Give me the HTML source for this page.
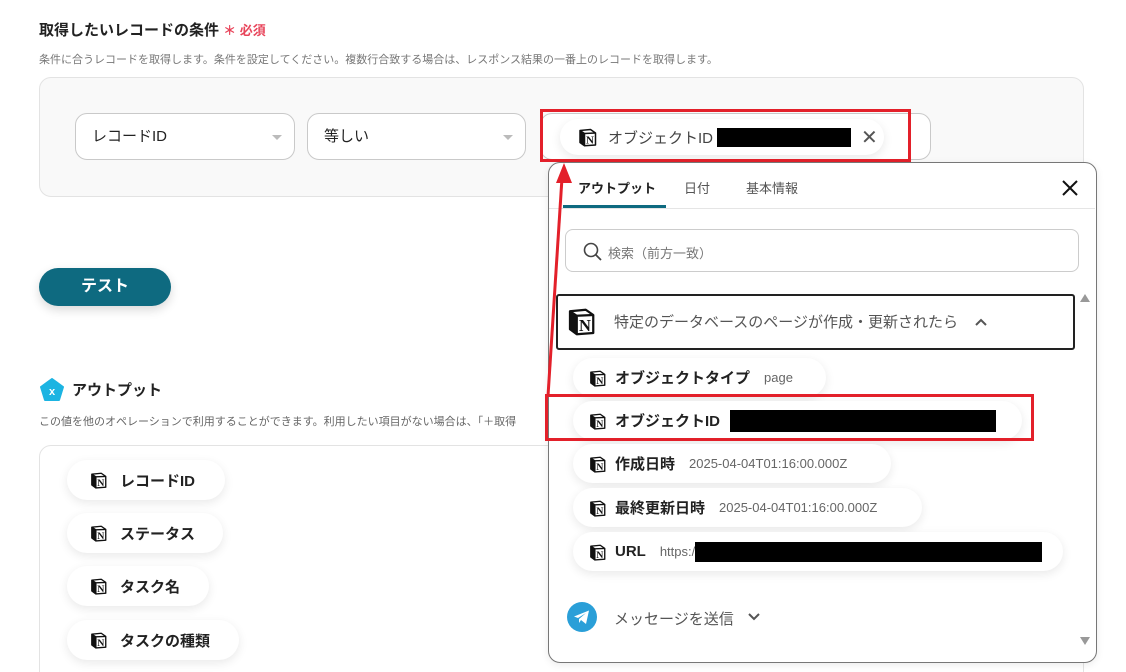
<!DOCTYPE html>
<html style="width:1126px;height:672px;overflow:hidden"><head><meta charset="utf-8">
<style>
*{box-sizing:border-box;margin:0;padding:0}
body{width:1126px;height:672px;overflow:hidden;background:#fff;position:relative;font-family:"Liberation Sans","Noto Sans CJK JP",sans-serif;color:#222}
.a{position:absolute}
.sel{position:absolute;height:47px;border:1px solid #c9c9c9;border-radius:12px;background:#fff;font-size:15px;padding:0 16px;line-height:45px;color:#222}
.sel:after{content:"";position:absolute;right:12px;top:21px;border-left:5px solid transparent;border-right:5px solid transparent;border-top:5px solid #bbb}
.chip{position:absolute;height:39px;background:#fff;border-radius:20px;box-shadow:0 3px 10px rgba(0,0,0,.09);display:flex;align-items:center;padding-left:16px;font-size:15px;font-weight:bold;color:#222;white-space:nowrap}
.chip svg{margin-right:8px;flex:none}
.chip .v{font-weight:normal;color:#666;font-size:13px;margin-left:14px}
.blk{background:#000;display:inline-block}
</style></head><body>
<svg width="0" height="0" style="position:absolute"><defs>
<symbol id="n" viewBox="0 0 20 20"><path d="M2 3.5L12.5 2.5 17.5 6 17.5 18 6.5 18.8 2 15.5Z" fill="#fff" stroke="#111" stroke-width="1.5" stroke-linejoin="round"/><path d="M2 3.5L6.5 6.5 17.5 6M6.5 6.5L6.5 18.8" fill="none" stroke="#111" stroke-width="1.5"/><path d="M2 3.5L6.5 6.5 6.5 18.8 2 15.5Z" fill="#111"/><text x="12" y="16.5" font-family="Liberation Serif,serif" font-weight="bold" font-size="11" text-anchor="middle" fill="#111">N</text></symbol>
</defs></svg>

<div class="a" style="left:39px;top:19px;font-size:15px;font-weight:bold">取得したいレコードの条件 <span style="color:#e8445a;font-size:13px">＊ 必須</span></div>
<div class="a" style="left:39px;top:51px;font-size:11px;color:#777">条件に合うレコードを取得します。条件を設定してください。複数行合致する場合は、レスポンス結果の一番上のレコードを取得します。</div>
<div class="a" style="left:39px;top:77px;width:1045px;height:120px;background:#f9f9f9;border:1px solid #e3e3e3;border-radius:12px"></div>
<div class="sel" style="left:75px;top:113px;width:220px">レコードID</div>
<div class="sel" style="left:307px;top:113px;width:219px">等しい</div>
<div class="a" style="left:540px;top:113px;width:391px;height:47px;border:1px solid #c9c9c9;border-radius:12px;background:#fff"></div>
<div class="chip" style="left:560px;top:119px;width:324px;height:36px;font-weight:normal;color:#444;padding-left:18px"><svg width="20" height="20"><use href="#n"/></svg><span style="margin-left:2px">オブジェクトID</span><span class="blk" style="width:134px;height:19px;margin-left:4px"></span><span style="margin-left:10px;font-size:20px;color:#555">✕</span></div>
<div class="a" style="left:540px;top:109px;width:371px;height:53px;border:3px solid #e3202a"></div>

<div class="a" style="left:39px;top:268px;width:132px;height:38px;background:#0e6a80;border-radius:19px;color:#fff;font-weight:bold;font-size:16px;text-align:center;line-height:38px;box-shadow:0 4px 10px rgba(0,0,0,.15)">テスト</div>

<svg class="a" style="left:40px;top:378px" width="24" height="24" viewBox="0 0 24 24"><path d="M12 1L23 9 19 22 5 22 1 9Z" fill="#1cb4e2" stroke="#1cb4e2" stroke-linejoin="round" stroke-width="2"/><text x="12" y="17" font-size="11" font-weight="bold" fill="#fff" text-anchor="middle" font-family="Liberation Sans,sans-serif">x</text></svg>
<div class="a" style="left:72px;top:379px;font-size:15px;font-weight:bold">アウトプット</div>
<div class="a" style="left:39px;top:413px;font-size:11px;color:#666">この値を他のオペレーションで利用することができます。利用したい項目がない場合は、「＋取得</div>
<div class="a" style="left:39px;top:445px;width:1045px;height:260px;border:1px solid #e3e3e3;border-radius:12px"></div>
<div class="chip" style="left:67px;top:460px;width:158px;height:40px;padding-left:23px"><svg width="18" height="18"><use href="#n"/></svg><span style="margin-left:4px">レコードID</span></div>
<div class="chip" style="left:67px;top:513px;width:156px;height:40px;padding-left:23px"><svg width="18" height="18"><use href="#n"/></svg><span style="margin-left:4px">ステータス</span></div>
<div class="chip" style="left:67px;top:566px;width:142px;height:40px;padding-left:23px"><svg width="18" height="18"><use href="#n"/></svg><span style="margin-left:4px">タスク名</span></div>
<div class="chip" style="left:67px;top:620px;width:172px;height:40px;padding-left:23px"><svg width="18" height="18"><use href="#n"/></svg><span style="margin-left:4px">タスクの種類</span></div>

<div class="a" style="left:548px;top:162px;width:549px;height:501px;background:#fff;border:1px solid #777;border-radius:12px;box-shadow:0 2px 8px rgba(0,0,0,.08)"></div>
<div class="a" style="left:578px;top:178px;font-size:13px;font-weight:bold">アウトプット</div>
<div class="a" style="left:684px;top:178px;font-size:13px;color:#555">日付</div>
<div class="a" style="left:746px;top:178px;font-size:13px;color:#555">基本情報</div>
<div class="a" style="left:549px;top:208px;width:546px;height:1px;background:#e5e5e5"></div>
<div class="a" style="left:563px;top:205px;width:103px;height:3px;background:#0e6a80"></div>
<svg class="a" style="left:1061px;top:179px" width="18" height="18"><path d="M2 2L16 16M16 2L2 16" stroke="#111" stroke-width="2"/></svg>
<div class="a" style="left:565px;top:229px;width:514px;height:43px;border:1px solid #ccc;border-radius:8px"></div>
<svg class="a" style="left:583px;top:242px" width="20" height="20"><circle cx="8" cy="8" r="6.5" fill="none" stroke="#444" stroke-width="1.6"/><path d="M13 13L18 18" stroke="#444" stroke-width="1.8"/></svg>
<div class="a" style="left:608px;top:243px;font-size:13px;color:#777">検索（前方一致）</div>
<div class="a" style="left:556px;top:294px;width:519px;height:56px;border:2px solid #222;border-radius:3px"></div>
<svg class="a" style="left:567px;top:306px" width="30" height="30"><use href="#n"/></svg>
<div class="a" style="left:614px;top:311px;font-size:15px;color:#555">特定のデータベースのページが作成・更新されたら</div>
<svg class="a" style="left:974px;top:317px" width="14" height="10"><path d="M2 8L7 3 12 8" fill="none" stroke="#555" stroke-width="2"/></svg>
<div class="a" style="left:1080px;top:294px;border-left:5px solid transparent;border-right:5px solid transparent;border-bottom:8px solid #999"></div>
<div class="a" style="left:1080px;top:637px;border-left:5px solid transparent;border-right:5px solid transparent;border-top:8px solid #999"></div>

<div class="chip" style="left:573px;top:358px;width:253px"><svg width="18" height="18"><use href="#n"/></svg>オブジェクトタイプ<span class="v">page</span></div>
<div class="chip" style="left:573px;top:401px;width:449px"><svg width="18" height="18"><use href="#n"/></svg>オブジェクトID<span class="blk" style="width:266px;height:22px;margin-left:10px"></span></div>
<div class="a" style="left:545px;top:394px;width:489px;height:47px;border:3px solid #e3202a"></div>
<div class="chip" style="left:573px;top:444px;width:318px"><svg width="18" height="18"><use href="#n"/></svg>作成日時<span class="v">2025-04-04T01:16:00.000Z</span></div>
<div class="chip" style="left:573px;top:488px;width:349px"><svg width="18" height="18"><use href="#n"/></svg>最終更新日時<span class="v">2025-04-04T01:16:00.000Z</span></div>
<div class="chip" style="left:573px;top:532px;width:490px"><svg width="18" height="18"><use href="#n"/></svg>URL<span class="v">https:/</span><span class="blk" style="width:347px;height:20px"></span></div>

<svg class="a" style="left:567px;top:602px" width="30" height="30"><circle cx="15" cy="15" r="15" fill="#2a9fd8"/><path d="M7 14.5L22 8.5 19 22 14 18 12 21 12 17 19 11 11 16Z" fill="#fff"/></svg>
<div class="a" style="left:614px;top:608px;font-size:15px;color:#555">メッセージを送信</div>
<svg class="a" style="left:747px;top:612px" width="14" height="10"><path d="M2 2L7 7 12 2" fill="none" stroke="#555" stroke-width="2"/></svg>

<svg class="a" style="left:0;top:0" width="1126" height="672"><path d="M548 396L562 178" stroke="#e3202a" stroke-width="3"/><path d="M564 163L556 183 572 183Z" fill="#e3202a"/></svg>
</body></html>
